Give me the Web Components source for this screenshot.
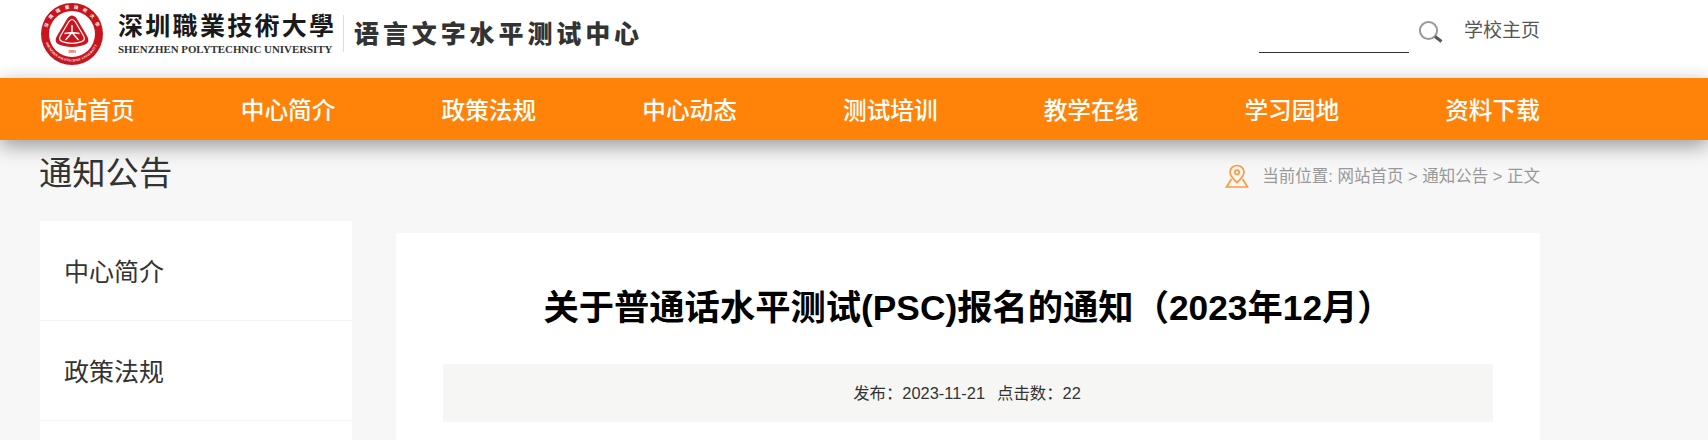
<!DOCTYPE html>
<html lang="zh-CN">
<head>
<meta charset="utf-8">
<title>通知公告</title>
<style>
    html, body { margin: 0; height: 440px; overflow: hidden; background: #f7f7f7; }
    body { font-family: "Liberation Sans", "Noto Sans CJK SC", sans-serif; color: #333; }
</style>
</head>
<body>
<site-header></site-header>
<main-nav></main-nav>
<page-heading heading="通知公告"></page-heading>
<content-row>
    <side-menu slot="side">
        <menu-item>中心简介</menu-item>
        <menu-item>政策法规</menu-item>
        <menu-item style="height: 19px; border: 0"></menu-item>
    </side-menu>
    <article-view slot="main" heading="关于普通话水平测试(PSC)报名的通知（2023年12月）" date="2023-11-21" hits="22"></article-view>
</content-row>

<script>
// Логотип-печать
class SchoolSeal extends HTMLElement {
    constructor() {
        super();
        this.attachShadow({ mode: 'open' });
        this.shadowRoot.innerHTML = `
<style>
    :host { display: block; width: 62px; height: 62px; }
    svg { display: block; }
    text { font-family: "Noto Sans CJK TC", sans-serif; font-weight: 700; fill: #fff; }
</style>
<svg width="62" height="62" viewBox="0 0 62 62">
    <defs>
        <path id="arcTop" d="M5.500 31a25.500 25.500 0 0 1 51 0"/>
        <path id="arcBottom" d="M3.500 31a27.500 27.500 0 0 0 55 0"/>
    </defs>
    <circle cx="31" cy="31" r="31" fill="#c8161e"/>
    <circle cx="31" cy="31" r="23" fill="#fff"/>
    <text font-size="4.400"><textPath href="#arcTop" startOffset="8%" textLength="66" lengthAdjust="spacing">深圳職業技術大學</textPath></text>
    <text font-size="3.200"><textPath href="#arcBottom" startOffset="10%" textLength="66" lengthAdjust="spacing" style="font-family:'Liberation Serif',serif">SHENZHEN POLYTECHNIC UNIVERSITY</textPath></text>
    <path d="M31 12.500c2 0 3.500 1.200 5 3.500l10 17c2 3.500 2 7-2 8.500-4 1.500-8 2.500-13 2.500s-9-1-13-2.500c-4-1.500-4-5-2-8.500l10-17c1.500-2.300 3-3.500 5-3.500z" fill="#c8161e"/>
    <path d="M31 16.500c1.300 0 2.300.8 3.300 2.300l8.200 14c1.300 2.300 1.200 4.600-1.300 5.600-3.300 1.300-6.500 2-10.200 2s-6.900-.7-10.200-2c-2.500-1-2.600-3.300-1.300-5.600l8.200-14c1-1.500 2-2.300 3.300-2.300z" fill="none" stroke="#fff" stroke-width="1.200"/>
    <path d="M31 22v7.500M31 29.500l-6.500 7.500M31 29.500l6.500 7.500M23.500 30.500l7.500-1 7.500 1" fill="none" stroke="#fff" stroke-width="1.400"/>
    <rect x="25.500" y="47" width="11" height="4" fill="#fff"/>
    <text x="31" y="50.400" font-size="3.800" text-anchor="middle" style="fill:#c8161e;font-family:'Liberation Serif',serif">1993</text>
</svg>`;
    }
}

// Шапка: логотип, поиск, ссылка
class SiteHeader extends HTMLElement {
    constructor() {
        super();
        this.attachShadow({ mode: 'open' });
        this.shadowRoot.innerHTML = `
<style>
    :host { display: block; background: #fff; height: 78px; }
    .inner { width: 1500px; height: 78px; margin-left: 40px; display: flex; align-items: flex-start; }
    school-seal { margin: 3px 0 0 1px; }
    .names { margin: 9px 0 0 15px; width: 216px; }
    .cn { font: 700 25px/30px "Noto Sans CJK TC", sans-serif; color: #1a1a1a; letter-spacing: 2.300px; white-space: nowrap; }
    .en { font: 700 10.900px/13px "Liberation Serif", serif; color: #333; white-space: nowrap; margin-top: 4px; }
    .bar { width: 1px; height: 37px; background: #ddd; margin: 15px 11px 0 9px; }
    .center { font: 900 25px/30px "Noto Sans CJK SC", sans-serif; color: #333; letter-spacing: 3.900px; margin: 17px 0 0 -1px; white-space: nowrap; }
    .tools { margin-left: auto; display: flex; align-items: flex-start; }
    .field { width: 150px; height: 52px; border-bottom: 1px solid #333; }
    .tools svg { margin: 20px 0 0 9px; display: block; }
    .home { font: 19px/24px "Noto Sans CJK SC", sans-serif; color: #555; margin: 17px 0 0 21px; white-space: nowrap; }
</style>
<div class="inner">
    <school-seal></school-seal>
    <div class="names">
        <div class="cn">深圳職業技術大學</div>
        <div class="en">SHENZHEN POLYTECHNIC UNIVERSITY</div>
    </div>
    <div class="bar"></div>
    <div class="center">语言文字水平测试中心</div>
    <div class="tools">
        <div class="field"></div>
        <svg width="25" height="24" viewBox="0 0 25 24">
            <circle cx="10.500" cy="10.500" r="8.600" fill="none" stroke="#999" stroke-width="2"/>
            <path d="M17 16.500l6.500 5" stroke="#555" stroke-width="3" fill="none"/>
        </svg>
        <div class="home">学校主页</div>
    </div>
</div>`;
    }
}

// Главное меню
class MainNav extends HTMLElement {
    constructor() {
        super();
        this.attachShadow({ mode: 'open' });
        const items = ['网站首页', '中心简介', '政策法规', '中心动态', '测试培训', '教学在线', '学习园地', '资料下载'];
        this.shadowRoot.innerHTML = `
<style>
    :host { display: block; position: relative; background: #ff8308; height: 62px; box-shadow: 0 6px 20px rgba(0,0,0,.38); }
    nav { width: 1500px; margin-left: 40px; height: 62px; display: flex; justify-content: space-between; align-items: center; }
    a { font: 500 23.700px/32px "Noto Sans CJK SC", sans-serif; color: #fff; }
</style>
<nav>${items.map(t => `<a>${t}</a>`).join('')}</nav>`;
    }
}

// Заголовок раздела и хлебные крошки
class PageHeading extends HTMLElement {
    constructor() {
        super();
        this.attachShadow({ mode: 'open' });
        this.shadowRoot.innerHTML = `
<style>
    :host { display: block; }
    .inner { width: 1500px; margin-left: 40px; height: 81px; display: flex; justify-content: space-between; align-items: flex-start; }
    h2 { margin: 11px 0 0 -1px; font: 400 33.300px/40px "Noto Sans CJK SC", sans-serif; color: #333; }
    .crumbs { display: flex; align-items: center; margin-top: 24px; font: 16.500px/24px "Liberation Sans", "Noto Sans CJK SC", sans-serif; color: #999; }
    svg { margin-right: 13px; display: block; }
</style>
<div class="inner">
    <h2></h2>
    <div class="crumbs">
        <svg width="24" height="24" viewBox="0 0 24 24" fill="none" stroke="#ff9a3c" stroke-width="1.700">
            <path d="M12 1.500c-4 0-7 3-7 6.800 0 2.800 2.400 6 7 10.200 4.600-4.200 7-7.400 7-10.200 0-3.800-3-6.800-7-6.800z"/>
            <circle cx="12" cy="8.300" r="2.200"/>
            <path d="M6.500 15l-5 8h21l-5-8"/>
        </svg>
        当前位置: 网站首页 &gt; 通知公告 &gt; 正文
    </div>
</div>`;
        this.shadowRoot.querySelector('h2').textContent = this.getAttribute('heading') || '通知公告';
    }
}

// Две колонки контента
class ContentRow extends HTMLElement {
    constructor() {
        super();
        this.attachShadow({ mode: 'open' });
        this.shadowRoot.innerHTML = `
<style>
    :host { display: flex; width: 1500px; margin-left: 40px; align-items: flex-start; gap: 44px; }
    .side { flex: 0 0 312px; }
    .main { flex: 1; margin-top: 12px; }
</style>
<div class="side"><slot name="side"></slot></div>
<div class="main"><slot name="main"></slot></div>`;
    }
}

class SideMenu extends HTMLElement {
    constructor() {
        super();
        this.attachShadow({ mode: 'open' });
        this.shadowRoot.innerHTML = `
<style>
    :host { display: block; background: #fff; }
</style>
<slot></slot>`;
    }
}

class MenuItem extends HTMLElement {
    constructor() {
        super();
        this.attachShadow({ mode: 'open' });
        this.shadowRoot.innerHTML = `
<style>
    :host { display: flex; align-items: center; padding: 0 0 2px 24px; box-sizing: border-box; height: 100px; border-bottom: 1px solid #f3f3f3; font: 400 25px/32px "Noto Sans CJK SC", sans-serif; color: #333; }
</style>
<slot></slot>`;
    }
}

// Карточка статьи
class ArticleView extends HTMLElement {
    constructor() {
        super();
        this.attachShadow({ mode: 'open' });
        this.shadowRoot.innerHTML = `
<style>
    :host { display: block; box-sizing: border-box; background: #fff; padding: 47px 47px 0; height: 207px; }
    h1 { margin: 0 0 29px; text-align: center; font: 700 35.300px/55px "Liberation Sans", "Noto Sans CJK SC", sans-serif; color: #000; white-space: nowrap; }
    .meta { height: 58px; background: #f6f6f4; display: flex; align-items: center; justify-content: center; gap: 12px; padding-right: 2px; font: 16.400px/24px "Liberation Sans", "Noto Sans CJK SC", sans-serif; color: #333; }
</style>
<h1></h1>
<div class="meta"><span class="date"></span><span class="hits"></span></div>`;
        this.shadowRoot.querySelector('h1').textContent = this.getAttribute('heading');
        this.shadowRoot.querySelector('.date').textContent = '发布：' + this.getAttribute('date');
        this.shadowRoot.querySelector('.hits').textContent = '点击数：' + this.getAttribute('hits');
    }
}

customElements.define('school-seal', SchoolSeal);
customElements.define('site-header', SiteHeader);
customElements.define('main-nav', MainNav);
customElements.define('page-heading', PageHeading);
customElements.define('content-row', ContentRow);
customElements.define('side-menu', SideMenu);
customElements.define('menu-item', MenuItem);
customElements.define('article-view', ArticleView);
</script>
</body>
</html>
